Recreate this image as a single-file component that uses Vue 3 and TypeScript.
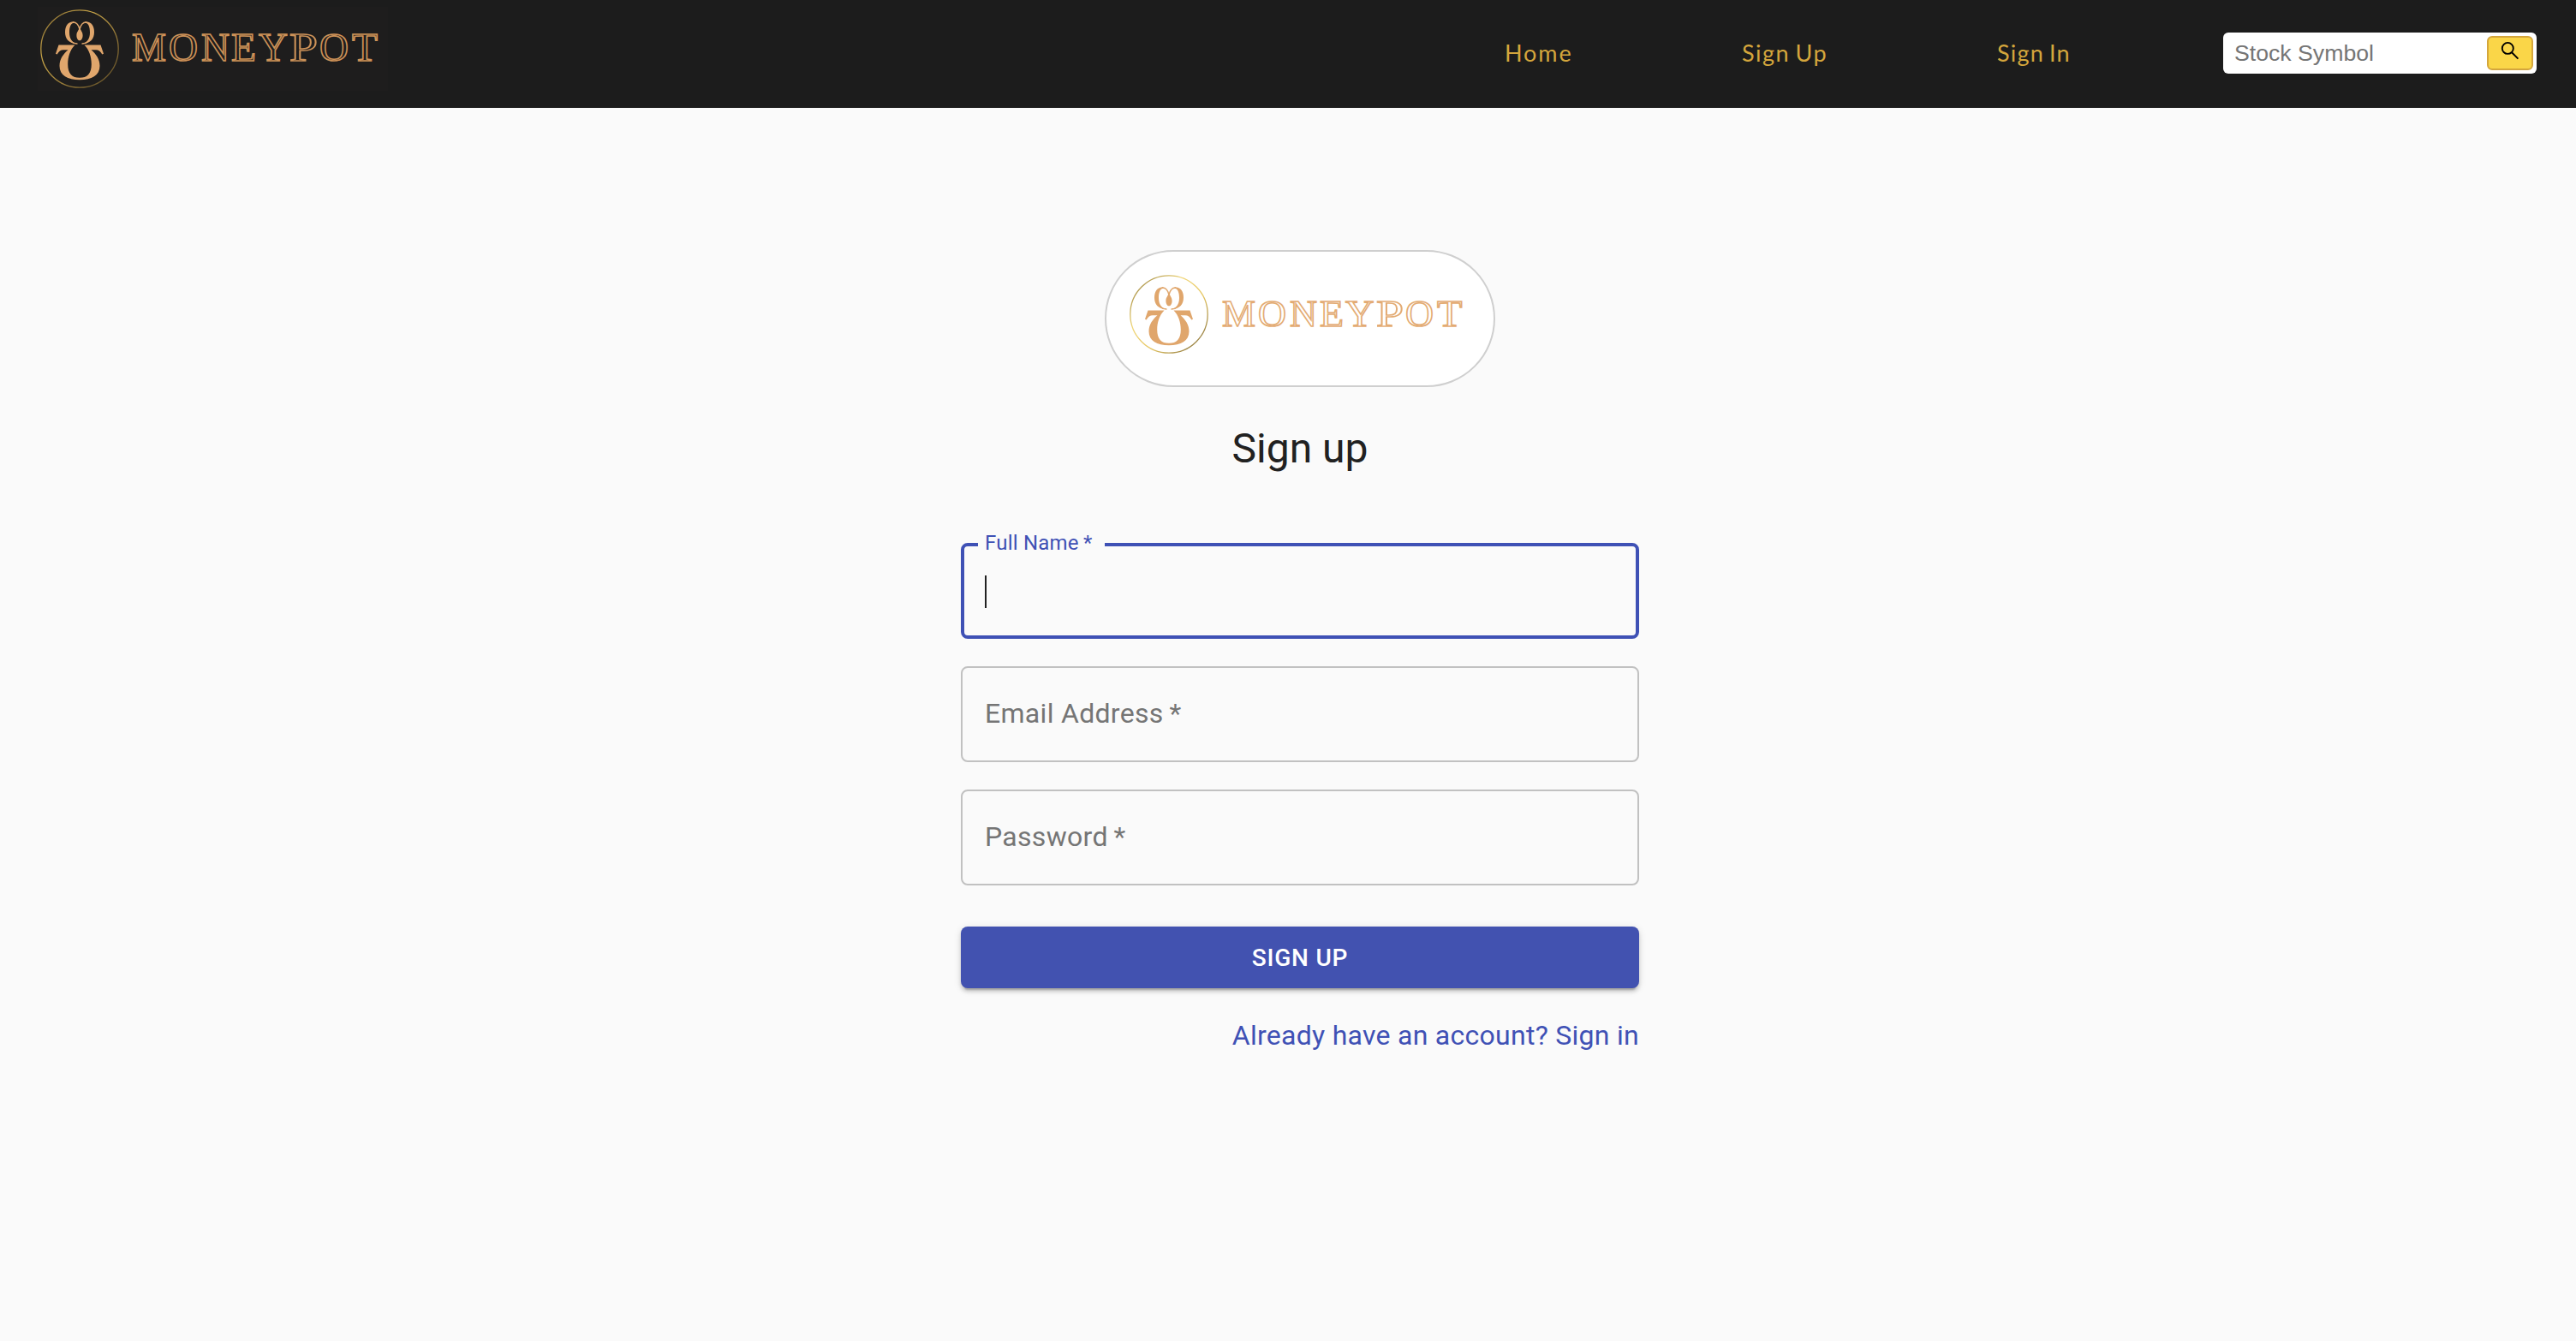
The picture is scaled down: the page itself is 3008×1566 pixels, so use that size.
<script setup lang="ts">
interface NavItem { label: string; cls: string }
const nav: NavItem[] = [
  { label: 'Home', cls: 'home' },
  { label: 'Sign Up', cls: 'sign-up' },
  { label: 'Sign In', cls: 'sign-in' },
]

const fields: string[] = ['Email Address', 'Password']

interface Letter { ch: string; x: number; w: number }
// Left edge and advance of every letter of the wordmark, relative to the emblem centre.
const place = (xs: number[], ws: number[]): Letter[] =>
  [...'MONEYPOT'].map((ch, i) => ({ ch, x: xs[i] + 49, w: ws[i] }))
const headerLetters = place([61, 104, 142, 177, 209, 245, 280, 318], [40, 34, 33, 29, 34, 33, 34, 30])
const cardLetters = place([62, 104, 141, 176, 206, 242, 276, 313], [39, 33, 32, 28, 33.500, 32, 33, 29.500])
</script>

<template>
  <div class="page">
    <header class="bar">
      <svg class="brand" width="409" height="98" viewBox="0 0 409 98">
        <defs>
          <linearGradient id="ringDark" x1="0" y1="0" x2="1" y2="1">
            <stop offset="0" stop-color="#7d6430" />
            <stop offset="0.35" stop-color="#c9a648" />
            <stop offset="0.6" stop-color="#9a7d3a" />
            <stop offset="0.85" stop-color="#6f5a2c" />
            <stop offset="1" stop-color="#c9a648" />
          </linearGradient>
          <g id="pot">
            <path d="M-8 -31.700C-14 -31.200 -17 -26 -17 -19.500C-17 -12 -13 -6.500 -3.500 -5.800C-8 -7.500 -12 -11 -12 -19C-12 -26 -10 -30.300 -6.500 -30.300V-31.700Z" />
            <path d="M8 -31.700C14 -31.200 17 -26 17 -19.500C17 -12 13 -6.500 3.500 -5.800C8 -7.500 12 -11 12 -19C12 -26 10 -30.300 6.500 -30.300V-31.700Z" />
            <path class="thin" d="M-8 -31C-4 -31.400 -1.500 -28.500 0 -23C1.500 -28.500 4 -31.400 8 -31" />
            <path d="M0 -25C1 -21.500 3.600 -20 3.600 -15.500C3.600 -12 1.800 -9.700 0 -9.700C-1.800 -9.700 -3.600 -12 -3.600 -15.500C-3.600 -20 -1 -21.500 0 -25Z" />
            <path class="thin" d="M-10 -8.500Q-7 -5.800 -2.500 -5.900M10 -8.500Q7 -5.800 2.500 -5.900" />
            <path d="M-24.500 -4.500H-5.500C-11 1 -13.800 9 -13.800 18C-13.800 29 -9 33.800 0 33.800C9 33.800 13.800 29 13.800 18C13.800 9 11 1 5.500 -4.500H24.500L28 5.800L26.300 6.500C24.500 3 22 1.300 19 1.300H13.500C19 6 23.500 12 23.500 20C23.500 31 14 36.300 0 36.300C-14 36.300 -23.500 31 -23.500 20C-23.500 12 -19 6 -13.500 1.300H-19C-22 1.300 -24.500 3 -26.300 6.500L-28 5.800Z" />
          </g>
        </defs>
        <circle cx="49" cy="49" r="45.200" fill="none" stroke="url(#ringDark)" stroke-width="1.300" />
        <use href="#pot" x="49" y="49" />
        <text class="word" y="63"><tspan v-for="(l, i) in headerLetters" :key="i" :x="l.x" :textLength="l.w" lengthAdjust="spacingAndGlyphs">{{ l.ch }}</tspan></text>
      </svg>
      <nav class="nav">
        <a v-for="n in nav" :key="n.label" :class="n.cls">{{ n.label }}</a>
      </nav>
      <form class="search">
        <span class="placeholder">Stock Symbol</span>
        <button type="button" class="go">
          <svg width="24" height="24" viewBox="0 0 24 24" fill="none" stroke="#000" stroke-width="1.900">
            <circle cx="9.300" cy="8.400" r="6.500" />
            <path d="M13.800 13L21.400 20.600" />
          </svg>
        </button>
      </form>
    </header>

    <main class="main">
      <div class="chip">
        <svg width="409" height="98" viewBox="0 0 409 98">
          <defs>
            <linearGradient id="ringLight" x1="0" y1="0" x2="1" y2="1">
              <stop offset="0.1" stop-color="#a8914a" />
              <stop offset="0.35" stop-color="#f0d678" />
              <stop offset="0.6" stop-color="#e6c766" />
              <stop offset="0.85" stop-color="#9f8848" />
              <stop offset="1" stop-color="#dcc068" />
            </linearGradient>
          </defs>
          <circle cx="49" cy="49" r="45.200" fill="none" stroke="url(#ringLight)" stroke-width="1.300" />
          <use href="#pot" x="49" y="49" />
          <text class="word" y="62.500"><tspan v-for="(l, i) in cardLetters" :key="i" :x="l.x" :textLength="l.w" lengthAdjust="spacingAndGlyphs">{{ l.ch }}</tspan></text>
        </svg>
      </div>
      <h1>Sign up</h1>
      <div class="field focused">
        <span class="float">Full Name&#8201;*</span>
        <i class="caret"></i>
      </div>
      <div v-for="f in fields" :key="f" class="field">
        <span class="label">{{ f }}&#8201;*</span>
      </div>
      <button type="button" class="submit">SIGN UP</button>
      <a class="signin">Already have an account? Sign in</a>
    </main>
  </div>
</template>

<style>
body { background: #fafafa; }
</style>

<style scoped>
.page {
  width: 3008px;
  height: 1566px;
  overflow: hidden;
  background: #fafafa;
  font-family: Roboto, "Liberation Sans", sans-serif;
}
.bar {
  display: flex;
  box-sizing: border-box;
  height: 126px;
  padding: 8px 46px 0 44px;
  background: #1c1c1c;
}
.brand { flex: none; background: #1e1d1d; }
#pot { fill: #e0a66c; }
.thin { fill: none; stroke: #e0a66c; stroke-width: 1.5px; }
.word {
  font-family: "Liberation Serif", serif;
  font-size: 46px;
  fill: none;
  stroke: #cd9258;
  stroke-width: 1.6px;
}
.chip .word { font-size: 45px; stroke: #e3ab73; }
.nav {
  display: flex;
  margin-left: auto;
  color: #d4a63c;
  font-family: Lato, "Liberation Sans", sans-serif;
  font-size: 27px;
  line-height: 40px;
  letter-spacing: 1.9px;
  white-space: nowrap;
  padding-top: 34px;
}
.home { width: 277px; margin-left: -1px; }
.sign-up { width: 298px; letter-spacing: 1.5px; word-spacing: -2px; }
.sign-in { width: 264px; letter-spacing: 1.2px; word-spacing: -2px; }
.search {
  display: flex;
  flex: none;
  align-items: center;
  justify-content: space-between;
  box-sizing: border-box;
  width: 366px;
  height: 48px;
  margin-top: 30px;
  padding: 0 4px 0 13px;
  border-radius: 6px;
  background: #fff;
}
.placeholder {
  color: #757575;
  font-family: "Liberation Sans", Arial, sans-serif;
  font-size: 26.67px;
  line-height: 48px;
}
.go {
  display: flex;
  justify-content: center;
  align-items: flex-start;
  box-sizing: border-box;
  width: 54px;
  height: 40px;
  padding: 4px 0 0;
  border: 2px solid #d4a63c;
  border-radius: 6px;
  background: #fad648;
}
.main {
  display: flex;
  flex-direction: column;
  width: 792px;
  margin: 166px 0 0 1122px;
}
.chip {
  align-self: center;
  box-sizing: border-box;
  width: 456px;
  height: 160px;
  padding: 24px 0 0 24px;
  border: 2px solid #cfcfcf;
  border-radius: 80px;
  background: #fff;
}
h1 {
  margin: 40px 0 0;
  color: #212121;
  font-size: 48px;
  font-weight: 400;
  line-height: 64px;
  text-align: center;
}
.field {
  display: flex;
  align-items: center;
  position: relative;
  box-sizing: border-box;
  height: 112px;
  margin-top: 32px;
  padding: 0 26px 2px;
  border: 2px solid #c1c1c1;
  border-radius: 8px;
}
.field.focused {
  margin-top: 78px;
  padding: 2px 24px 0;
  border: 4px solid #3f51b5;
}
.label {
  color: #757575;
  font-size: 32px;
  line-height: 32px;
  letter-spacing: 0.3px;
}
.float {
  position: absolute;
  left: 16px;
  top: -18px;
  width: 148px;
  box-sizing: border-box;
  padding-left: 8px;
  background: #fafafa;
  color: #3f51b5;
  font-size: 24px;
  line-height: 28px;
  letter-spacing: 0.22px;
  white-space: nowrap;
}
.caret { width: 2px; height: 38px; background: #212121; }
.submit {
  height: 72px;
  margin: 48px 0 0;
  padding: 0;
  border: 0;
  border-radius: 8px;
  background: #4252b0;
  box-shadow: 0 6px 2px -4px rgba(0, 0, 0, 0.2), 0 4px 4px rgba(0, 0, 0, 0.14), 0 2px 10px rgba(0, 0, 0, 0.12);
  color: #fff;
  font: 500 28px/49px Roboto, sans-serif;
  letter-spacing: 0.8px;
}
.signin {
  margin-top: 32px;
  color: #3f51b5;
  font-size: 32px;
  line-height: 46px;
  letter-spacing: 0.27px;
  text-align: right;
}
</style>
